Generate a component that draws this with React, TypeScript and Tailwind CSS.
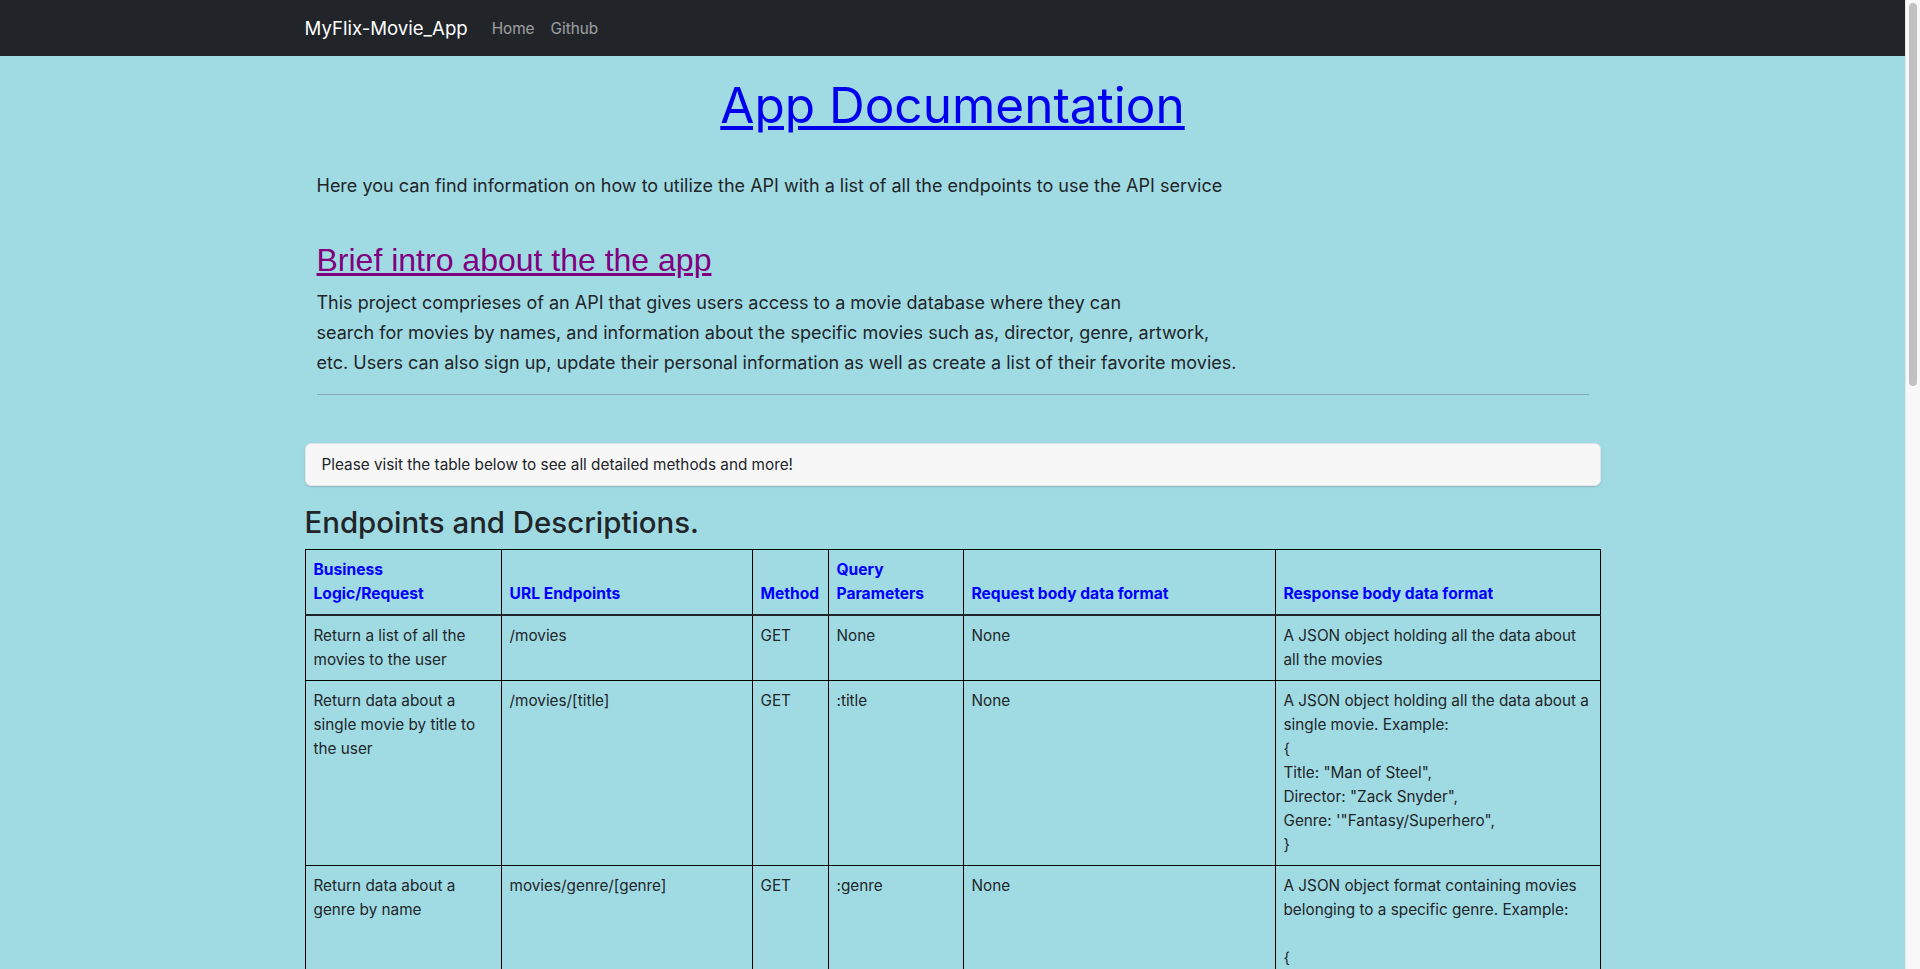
const rows = [
  {
    logic: "Return a list of all the movies to the user",
    url: "/movies",
    method: "GET",
    query: "None",
    body: "None",
    response: ["A JSON object holding all the data about all the movies"],
  },
  {
    logic: "Return data about a single movie by title to the user",
    url: "/movies/[title]",
    method: "GET",
    query: ":title",
    body: "None",
    response: [
      "A JSON object holding all the data about a single movie. Example:",
      "{",
      'Title: "Man of Steel",',
      'Director: "Zack Snyder",',
      "Genre: '\"Fantasy/Superhero\",",
      "}",
    ],
  },
  {
    logic: "Return data about a genre by name",
    url: "movies/genre/[genre]",
    method: "GET",
    query: ":genre",
    body: "None",
    response: [
      "A JSON object format containing movies belonging to a specific genre. Example:",
      "\u00a0",
      "{",
      'Name: "Fantasy/Superhero",',
      'Description: "Stories about heroes with powers"',
      "}",
    ],
  },
  {
    logic: "Return data about a director by name",
    url: "/movies/director/[name]",
    method: "GET",
    query: ":name",
    body: "None",
    response: ["A JSON object holding data about the director"],
  },
  {
    logic: "Allow new users to register",
    url: "/users",
    method: "POST",
    query: "None",
    body: "A JSON object holding the user data",
    response: ["A JSON object holding the data of the new user"],
  },
];

export default function App() {
  return (
    <div className="flex min-h-screen bg-[#a0dbe3] font-['Inter',sans-serif] text-[#212529]">
      <div className="min-w-0 flex-1">
        <nav className="h-14 bg-[#212529]">
          <div className="mx-auto flex h-full max-w-[1320px] items-center px-3 pt-[2px]">
            <span className="mr-4 text-[18.6px] text-white">MyFlix-Movie_App</span>
            <a href="#" className="px-2 text-[15.3px] text-white/55">
              Home
            </a>
            <a href="#" className="px-2 text-[15.3px] text-white/55">
              Github
            </a>
          </div>
        </nav>

        <main className="mx-auto max-w-[1320px] px-3 pb-10">
          <h1 className="mt-[18px] text-center text-[49.5px] leading-[63px]">
            <a href="#" className="text-[#0000ee] underline">
              App Documentation
            </a>
          </h1>

          <div className="px-3">
            <p className="mt-[34px] text-[18px] leading-[30px]">
              Here you can find information on how to utilize the API with a list of all the endpoints to use the API service
            </p>
            <h2 className="mt-[40px] font-['Liberation_Sans',sans-serif] text-[32px] leading-[38px]">
              <a href="#" className="text-[#800080] underline">
                Brief intro about the the app
              </a>
            </h2>
            <p className="mt-[9px] text-[18px] leading-[30px]">
              This project comprieses of an API that gives users access to a movie database where they can
              <br />
              search for movies by names, and information about the specific movies such as, director, genre, artwork,
              <br />
              etc. Users can also sign up, update their personal information as well as create a list of their favorite movies.
            </p>
            <hr className="mt-4 border-[#80aeb4]" />
          </div>

          <div className="mt-12 rounded-md border border-[#e4e4e4] bg-[#f7f7f7] px-4 pt-[9px] pb-2 text-[15.3px] leading-6 shadow-[0_1px_2px_rgba(0,0,0,0.15)]">
            Please visit the table below to see all detailed methods and more!
          </div>

          <h2 className="mt-[18px] mb-[7px] text-[29.4px] font-medium leading-[38px]">Endpoints and Descriptions.</h2>

          <table className="w-full border-collapse border border-black text-[15.3px] leading-6">
            <thead>
              <tr className="border-b-2 border-[#212529] align-bottom text-[15.6px] font-bold text-[#0000ff]">
                <th className="w-[196px] border border-black p-2 text-left">
                  Business
                  <br />
                  Logic/Request
                </th>
                <th className="w-[251px] border border-black p-2 text-left">URL Endpoints</th>
                <th className="w-[76px] border border-black p-2 text-left">Method</th>
                <th className="w-[135px] border border-black p-2 text-left">
                  Query
                  <br />
                  Parameters
                </th>
                <th className="w-[312px] border border-black p-2 text-left">Request body data format</th>
                <th className="border border-black p-2 text-left">Response body data format</th>
              </tr>
            </thead>
            <tbody>
              {rows.map((r) => (
                <tr key={r.url} className="align-top">
                  <td className="border border-black p-2">{r.logic}</td>
                  <td className="border border-black p-2">{r.url}</td>
                  <td className="border border-black p-2">{r.method}</td>
                  <td className="border border-black p-2">{r.query}</td>
                  <td className="border border-black p-2">{r.body}</td>
                  <td className="border border-black p-2">
                    {r.response.map((l, i) => (
                      <div key={i}>{l}</div>
                    ))}
                  </td>
                </tr>
              ))}
            </tbody>
          </table>
        </main>
      </div>

      {/* scrollbar strip as in the screenshot */}
      <aside className="sticky top-0 h-screen w-[15px] shrink-0 self-start border-l border-[#e6e6e6] bg-[#f8f8f8] pt-[3px]">
        <div className="mx-auto h-[383px] w-2 rounded-full bg-[#c1c1c1]" />
      </aside>
    </div>
  );
}
